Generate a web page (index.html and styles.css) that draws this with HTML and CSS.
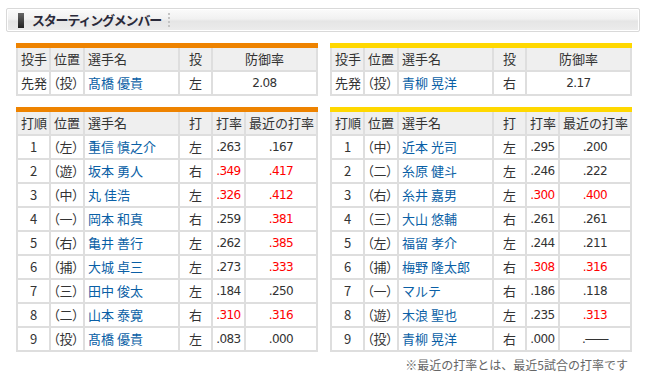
FILE: index.html
```html
<!DOCTYPE html>
<html lang="ja">
<head>
<meta charset="utf-8">
<link rel="stylesheet" href="styles.css">
</head>
<body>
<div class="page">
  <div class="titlebox">
    <span class="titlemark"></span>
    <span class="titletext">スターティングメンバー</span>
    <span class="titlesep"></span>
  </div>

  <div class="grid">
    <table class="tbl pitch orange">
      <colgroup><col class="c1"><col class="c2"><col class="c3"><col class="c4"><col class="c5w"></colgroup>
      <tr class="head"><th class="l">投手</th><th class="l">位置</th><th class="l">選手名</th><th>投</th><th>防御率</th></tr>
      <tr><td class="l">先発</td><td class="l pos">（投）</td><td class="l name">髙橋 優貴</td><td>左</td><td class="num">2.08</td></tr>
    </table>
    <table class="tbl pitch yellow">
      <colgroup><col class="c1"><col class="c2"><col class="c3"><col class="c4"><col class="c5w"></colgroup>
      <tr class="head"><th class="l">投手</th><th class="l">位置</th><th class="l">選手名</th><th>投</th><th>防御率</th></tr>
      <tr><td class="l">先発</td><td class="l pos">（投）</td><td class="l name">青柳 晃洋</td><td>右</td><td class="num">2.17</td></tr>
    </table>

    <table class="tbl bat orange">
      <colgroup><col class="c1"><col class="c2"><col class="c3"><col class="c4"><col class="c5"><col class="c6"></colgroup>
      <tr class="head"><th class="l">打順</th><th class="l">位置</th><th class="l">選手名</th><th>打</th><th class="l">打率</th><th class="l">最近の打率</th></tr>
      <tr><td>1</td><td class="l pos">（左）</td><td class="l name">重信 慎之介</td><td>左</td><td class="num">.263</td><td class="num">.167</td></tr>
      <tr><td>2</td><td class="l pos">（遊）</td><td class="l name">坂本 勇人</td><td>右</td><td class="num red">.349</td><td class="num red">.417</td></tr>
      <tr><td>3</td><td class="l pos">（中）</td><td class="l name">丸 佳浩</td><td>左</td><td class="num red">.326</td><td class="num red">.412</td></tr>
      <tr><td>4</td><td class="l pos">（一）</td><td class="l name">岡本 和真</td><td>右</td><td class="num">.259</td><td class="num red">.381</td></tr>
      <tr><td>5</td><td class="l pos">（右）</td><td class="l name">亀井 善行</td><td>左</td><td class="num">.262</td><td class="num red">.385</td></tr>
      <tr><td>6</td><td class="l pos">（捕）</td><td class="l name">大城 卓三</td><td>左</td><td class="num">.273</td><td class="num red">.333</td></tr>
      <tr><td>7</td><td class="l pos">（三）</td><td class="l name">田中 俊太</td><td>左</td><td class="num">.184</td><td class="num">.250</td></tr>
      <tr><td>8</td><td class="l pos">（二）</td><td class="l name">山本 泰寛</td><td>右</td><td class="num red">.310</td><td class="num red">.316</td></tr>
      <tr><td>9</td><td class="l pos">（投）</td><td class="l name">髙橋 優貴</td><td>左</td><td class="num">.083</td><td class="num">.000</td></tr>
    </table>
    <div class="rightcol">
      <table class="tbl bat yellow">
        <colgroup><col class="c1"><col class="c2"><col class="c3"><col class="c4"><col class="c5"><col class="c6"></colgroup>
        <tr class="head"><th class="l">打順</th><th class="l">位置</th><th class="l">選手名</th><th>打</th><th class="l">打率</th><th class="l">最近の打率</th></tr>
        <tr><td>1</td><td class="l pos">（中）</td><td class="l name">近本 光司</td><td>左</td><td class="num">.295</td><td class="num">.200</td></tr>
        <tr><td>2</td><td class="l pos">（二）</td><td class="l name">糸原 健斗</td><td>左</td><td class="num">.246</td><td class="num">.222</td></tr>
        <tr><td>3</td><td class="l pos">（右）</td><td class="l name">糸井 嘉男</td><td>左</td><td class="num red">.300</td><td class="num red">.400</td></tr>
        <tr><td>4</td><td class="l pos">（三）</td><td class="l name">大山 悠輔</td><td>右</td><td class="num">.261</td><td class="num">.261</td></tr>
        <tr><td>5</td><td class="l pos">（左）</td><td class="l name">福留 孝介</td><td>左</td><td class="num">.244</td><td class="num">.211</td></tr>
        <tr><td>6</td><td class="l pos">（捕）</td><td class="l name">梅野 隆太郎</td><td>右</td><td class="num red">.308</td><td class="num red">.316</td></tr>
        <tr><td>7</td><td class="l pos">（一）</td><td class="l name">マルテ</td><td>右</td><td class="num">.186</td><td class="num">.118</td></tr>
        <tr><td>8</td><td class="l pos">（遊）</td><td class="l name">木浪 聖也</td><td>左</td><td class="num">.235</td><td class="num red">.313</td></tr>
        <tr><td>9</td><td class="l pos">（投）</td><td class="l name">青柳 晃洋</td><td>右</td><td class="num">.000</td><td class="num">.――</td></tr>
      </table>
      <p class="note">※最近の打率とは、最近5試合の打率です</p>
    </div>
  </div>
</div>
</body>
</html>
```

FILE: styles.css
```css
html, body {
  margin: 0;
  padding: 0;
  background: #ffffff;
}
body {
  font-family: "Noto Sans CJK JP", "Noto Sans", sans-serif;
  color: #333333;
  font-size: 13px;
}
.page {
  padding: 8px 7px 0 6px;
}
.titlebox {
  height: 22px;
  border: 1px solid #d9d9d9;
  border-radius: 2px;
  background: linear-gradient(#fbfbfb 0%, #f1f1f1 45%, #e5e5e5 55%, #ececec 100%);
  display: flex;
  align-items: center;
  padding-left: 11px;
  box-shadow: inset 0 0 0 1px #ffffff;
}
.titlemark {
  width: 6px;
  height: 15px;
  background: linear-gradient(#666666, #222222);
  margin-right: 8px;
}
.titletext {
  font-size: 13px;
  font-weight: bold;
  color: #2a2a3a;
  letter-spacing: -1.2px;
  line-height: 16px;
}
.titlesep {
  width: 0;
  height: 14px;
  border-left: 2px dotted #c4c4c4;
  margin-left: 7px;
}
.grid {
  display: grid;
  grid-template-columns: 300px 300px;
  column-gap: 14px;
  row-gap: 11px;
  padding: 11px 0 0 10px;
  align-items: start;
}
.tbl {
  border-collapse: collapse;
  table-layout: fixed;
  width: 300px;
}
.tbl.orange { border-top: 5px solid #ee8300; }
.tbl.yellow { border-top: 5px solid #ffd800; }
.c1 { width: 33px; }
.c2 { width: 34px; }
.c3 { width: 95px; }
.c4 { width: 33px; }
.c5 { width: 33px; }
.c6 { width: 72px; }
.c5w { width: 105px; }
.tbl th, .tbl td {
  border: 2px solid #dedede;
  height: 22px;
  padding: 0;
  text-align: center;
  font-weight: normal;
  line-height: 20px;
  white-space: nowrap;
  overflow: hidden;
}
.tbl.orange tr:first-child th, .tbl.yellow tr:first-child th {
  border-top: 0;
}
.tbl th {
  background: #efefef;
  color: #333333;
}
.tbl td { background: #ffffff; }
.tbl .l {
  text-align: left;
  padding-left: 3px;
}
.tbl .pos {
  padding-left: 2px;
  font-feature-settings: "palt";
}
.tbl .name {
  color: #0a5fa6;
  padding-left: 3px;
}
.tbl .num {
  font-family: "DejaVu Sans", "Liberation Sans", sans-serif;
  font-size: 12px;
  letter-spacing: -0.6px;
}
.tbl .red { color: #ff0000; }
.rightcol {
  display: flex;
  flex-direction: column;
}
.note {
  margin: 5px 2px 0 0;
  text-align: right;
  font-size: 12px;
  color: #666666;
  line-height: 16px;
}
```
